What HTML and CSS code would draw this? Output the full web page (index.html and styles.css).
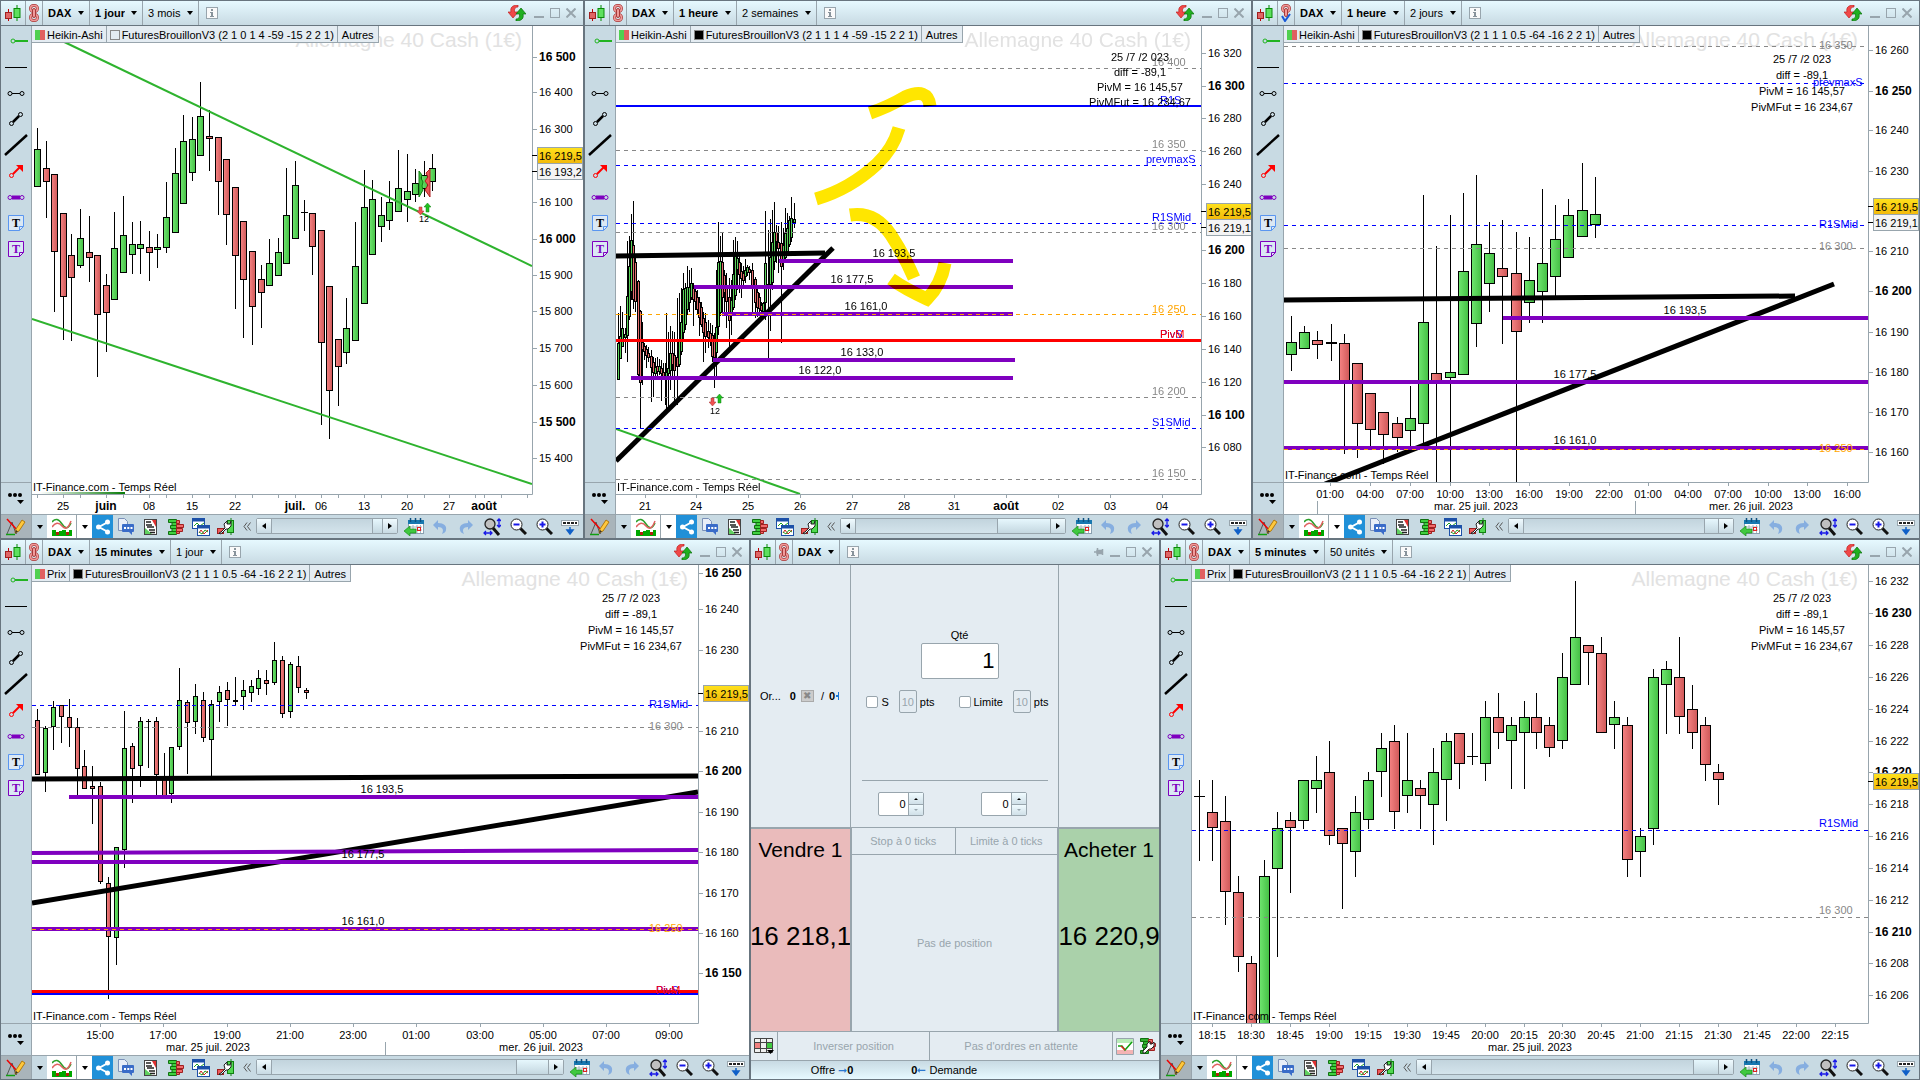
FILE: index.html
```html
<!DOCTYPE html>
<html lang="fr">
<head>
  <meta charset="UTF-8">
  <title>DAX - Allemagne 40 Cash (1€)</title>
  <link rel="stylesheet" href="styles.css">
</head>
<body>

  <!-- icons -->
  <svg class="defs" width="0" height="0" aria-hidden="true">
    <defs>
      <linearGradient id="upFill"><stop offset="0" stop-color="#6fe66f"/><stop offset="1" stop-color="#44bf44"/></linearGradient>
      <linearGradient id="downFill"><stop offset="0" stop-color="#f58383"/><stop offset="1" stop-color="#cf5858"/></linearGradient>
      <linearGradient id="goldFill" x2="0" y2="1"><stop offset="0" stop-color="#ffe21c"/><stop offset="1" stop-color="#f3b90b"/></linearGradient>
      <linearGradient id="feedFill"><stop offset="0" stop-color="#fff"/><stop offset="1" stop-color="#067a06"/></linearGradient>
    </defs>
    <symbol id="i-candles" viewBox="0 0 16 16">
      <path d="M3.5 4v12" stroke="#c00000"/><rect x="0.5" y="7.500" width="6" height="6" fill="#e06666" stroke="#a02020"/>
      <path d="M12 0v16" stroke="#008a00"/><rect x="9" y="3.500" width="6" height="9" fill="#5ee05e" stroke="#0a8a0a"/>
    </symbol>
    <symbol id="i-chain" viewBox="0 0 10 18">
      <g fill="none" stroke="#a83a3a" stroke-width="3"><rect x="1.500" y="1.500" width="7" height="6" rx="3"/><rect x="1.500" y="10.500" width="7" height="6" rx="3"/></g>
      <g fill="none" stroke="#f09a9a" stroke-width="1.600"><rect x="1.500" y="1.500" width="7" height="6" rx="3"/><rect x="1.500" y="10.500" width="7" height="6" rx="3"/></g>
      <rect x="3.500" y="4.500" width="3" height="9" rx="1.500" fill="#f09a9a" stroke="#a83a3a"/>
    </symbol>
    <symbol id="i-chain-down" viewBox="0 0 10 18">
      <rect x="1.500" y="1.500" width="7" height="6" rx="3" fill="none" stroke="#a83a3a" stroke-width="3"/>
      <rect x="1.500" y="1.500" width="7" height="6" rx="3" fill="none" stroke="#f09a9a" stroke-width="1.600"/>
      <rect x="3.500" y="4.500" width="3" height="8" rx="1.500" fill="#f09a9a" stroke="#a83a3a"/>
      <path d="M1 12l3 5 5-7" fill="none" stroke="#1858d8" stroke-width="2"/>
    </symbol>
    <symbol id="i-info" viewBox="0 0 12 12">
      <rect x="0.500" y="0.500" width="11" height="11" fill="#fafafa" stroke="#98a5ad"/>
      <path d="M5 2h2v2H5zM4 5h3v4h1v1H4V9h1V6H4z" fill="#88939b"/>
    </symbol>
    <symbol id="i-refresh" viewBox="0 0 18 16">
      <path d="M10 0C4 0 2 3 3 7H0l5 6 5-6H6.500C6 4 7 2 10 2z" fill="#f04848" stroke="#c02020" stroke-width="0.700"/>
      <path d="M8 16c6 0 8-3 7-7h3l-5-6-5 6h3.500C12 12 11 14 8 14z" fill="#20b020" stroke="#087008" stroke-width="0.700"/>
    </symbol>
    <symbol id="i-pin" viewBox="0 0 10 10"><path d="M0 5h3M3.500 1v8M3 3.500h4v3H3zM8.500 2v6" stroke="#98a5ad" stroke-width="1.500" fill="#98a5ad"/></symbol>
    <symbol id="i-min" viewBox="0 0 10 10"><path d="M0 9h10" stroke="#98a5ad" stroke-width="2"/></symbol>
    <symbol id="i-max" viewBox="0 0 10 10"><rect x="0.500" y="0.500" width="9" height="9" fill="none" stroke="#98a5ad"/></symbol>
    <symbol id="i-close" viewBox="0 0 10 10"><path d="M0.500 0.500l9 9M9.500 0.500l-9 9" stroke="#98a5ad" stroke-width="2"/></symbol>
    <symbol id="i-draw" viewBox="0 0 20 18">
      <path d="M1 16L6 4l4 12 4-10" fill="none" stroke="#555"/><path d="M1 1l11 12" stroke="#f00000" stroke-width="1.500"/>
      <path d="M0 16.500h9" stroke="#10a010" stroke-width="1.500"/>
      <path d="M9 15l1-4 6-9 3 2-6 9z" fill="#ffc83c" stroke="#b07a10"/><path d="M9 15l1-3 2 1.500z" fill="#333"/>
    </symbol>
    <symbol id="i-indic" viewBox="0 0 20 18">
      <path d="M0 4Q5-2 10 6t9-1" fill="none" stroke="#2aa02a" stroke-width="1.500"/>
      <path d="M0 9Q5 2 10 8t9-5" fill="none" stroke="#e06060" stroke-width="1.500"/>
      <path d="M0 12h4v2h3v-1h3v-1h4v2h3v-2h3v6H0z" fill="#00a800"/><path d="M4 14h3v3H4zM14 14h3v3h-3z" fill="#b02010"/>
    </symbol>
    <symbol id="i-share" viewBox="0 0 14 16">
      <path d="M12 3L3 8l9 5" fill="none" stroke="#fff" stroke-width="2"/><circle cx="11.500" cy="3" r="2.500" fill="#fff"/><circle cx="2.500" cy="8" r="2.500" fill="#fff"/><circle cx="11.500" cy="13" r="2.500" fill="#fff"/>
    </symbol>
    <symbol id="i-chat" viewBox="0 0 16 17">
      <path d="M0.500 0.500h6l3 3v9h-9z" fill="#e8eef8" stroke="#7a90b8"/><path d="M5 6h10q1 0 1 1v6q0 1-1 1h-1v3l-3-3H5q-1 0-1-1V7q0-1 1-1z" fill="#3a6cc8"/>
      <path d="M6 10h2M9.300 10h2M12.500 10h2" stroke="#fff" stroke-width="1.800"/>
    </symbol>
    <symbol id="i-list" viewBox="0 0 13 16">
      <rect x="0.500" y="0.500" width="12" height="15" fill="#fff" stroke="#444"/><path d="M8 1h4v7z" fill="#e03030"/><path d="M1 9v6h7z" fill="#60d060"/>
      <path d="M2 3h5M2 6h6M3 8h7M5 11h6M6 13.500h5" stroke="#222" stroke-width="1.500"/>
    </symbol>
    <symbol id="i-book" viewBox="0 0 16 16">
      <path d="M0.500 0.500h8v3h-8zM2.500 6.500h6v3h-6zM0.500 12.500h8v3h-8z" fill="#40d040" stroke="#107010"/>
      <path d="M4 3.500h5v3H4zM4 9.500h5v3H4z" fill="#40d040" stroke="#107010"/>
      <path d="M8.500 1.500h3v3h-3zM8.500 5.500h7v3h-7zM8.500 9.500h6v3h-6zM8.500 12.500h3v2h-3z" fill="#f06a6a" stroke="#a02020"/>
    </symbol>
    <symbol id="i-windows" viewBox="0 0 18 18">
      <rect x="0.500" y="0.500" width="12" height="10" fill="#fff" stroke="#1c50a8"/><path d="M0.500 2h12" stroke="#1c50a8" stroke-width="3"/><path d="M2 8l3-3 3 3 4-3" fill="none" stroke="#20a020"/>
      <rect x="5.500" y="7.500" width="12" height="10" fill="#fff" stroke="#1c50a8"/><path d="M5.500 9h12" stroke="#1c50a8" stroke-width="3"/><path d="M7 15l2-3 3 4 4-4" fill="none" stroke="#d02020"/><path d="M7 14l3 2 3-4 3 2" fill="none" stroke="#20a020"/>
    </symbol>
    <symbol id="i-wrench" viewBox="0 0 17 18">
      <rect x="0.500" y="10.500" width="6" height="5" fill="#f05a5a" stroke="#a02020"/><path d="M14 0v17" stroke="#108010"/><rect x="10.500" y="2.500" width="6" height="12" fill="#50d850" stroke="#108010"/>
      <path d="M4 14l4-4-1-4 3-3v3h3l1-3v5l-3 3H9l-4 4-2 1-1-1z" fill="#fff" stroke="#222"/>
    </symbol>
    <symbol id="i-chevrons" viewBox="0 0 8 9"><path d="M4 0.500L1 4.500l3 4M7.500 0.500l-3 4 3 4" fill="none" stroke="#555"/></symbol>
    <symbol id="i-calendar" viewBox="0 0 20 18">
      <rect x="4.500" y="2.500" width="15" height="13" fill="#fff" stroke="#8aa0b0"/><rect x="4" y="2" width="16" height="4" fill="#1878b0"/><path d="M6.500 0v4M11.500 0v4M16.500 0v4" stroke="#0c5080" stroke-width="1.500"/>
      <path d="M6 9h12M6 12h12M9 7v8M13 7v8M16.500 7v8" stroke="#a8b8c4"/><rect x="13.500" y="9.500" width="3" height="3" fill="none" stroke="#e02020"/>
      <path d="M0 13l6-5v3h6v4H6v3z" fill="#40c840" stroke="#189018" stroke-width="0.700"/>
    </symbol>
    <symbol id="i-undo" viewBox="0 0 14 14"><path d="M0 5l5-5v3c6 0 9 3 8 7 0 2-2 3-4 4 2-4 1-7-4-7v3z" fill="#86aee0"/></symbol>
    <symbol id="i-redo" viewBox="0 0 14 14"><path d="M14 5L9 0v3C3 3 0 6 1 10c0 2 2 3 4 4-2-4-1-7 4-7v3z" fill="#86aee0"/></symbol>
    <symbol id="i-zoomfit" viewBox="0 0 18 18">
      <path d="M10 10l6 7" stroke="#111" stroke-width="3"/><circle cx="7" cy="6" r="5" fill="#c0c0c0" stroke="#222" stroke-width="1.300"/>
      <path d="M16 1v8M14 3l2-2 2 2M14 7l2 2 2-2M1 15h8M3 13l-2 2 2 2M7 13l2 2-2 2" fill="none" stroke="#1818e8" stroke-width="1.300"/>
    </symbol>
    <symbol id="i-zoomout" viewBox="0 0 17 17"><path d="M10 10l6 6" stroke="#111" stroke-width="3"/><circle cx="6.500" cy="6.500" r="5.500" fill="#fff" stroke="#222"/><path d="M3.500 6.500h6" stroke="#1818e8" stroke-width="2"/></symbol>
    <symbol id="i-zoomin" viewBox="0 0 17 17"><path d="M10 10l6 6" stroke="#111" stroke-width="3"/><circle cx="6.500" cy="6.500" r="5.500" fill="#fff" stroke="#222"/><path d="M3.500 6.500h6M6.500 3.500v6" stroke="#1818e8" stroke-width="2"/></symbol>
    <symbol id="i-keys" viewBox="0 0 18 16"><rect x="0.500" y="1.500" width="17" height="5" fill="#fff" stroke="#98a5ad"/><path d="M2 4h14" stroke="#222" stroke-width="2" stroke-dasharray="3 1"/><path d="M9 8v6M6 11l3 4 3-4z" stroke="#1060c8" stroke-width="1.500" fill="#1060c8"/></symbol>

    <symbol id="t-ray" viewBox="0 0 24 24"><path d="M11 12h13" stroke="#22b422" stroke-width="2"/><circle cx="9" cy="12" r="2" fill="none" stroke="#22b422"/></symbol>
    <symbol id="t-hline" viewBox="0 0 24 24"><path d="M1 12.500h22" stroke="#000"/></symbol>
    <symbol id="t-segment" viewBox="0 0 24 24"><path d="M8 12.500h8" stroke="#000"/><circle cx="6" cy="12.500" r="2" fill="none" stroke="#000"/><circle cx="18" cy="12.500" r="2" fill="none" stroke="#000"/></symbol>
    <symbol id="t-diag" viewBox="0 0 24 24"><path d="M9 15l6-6" stroke="#000" stroke-width="2.500"/><circle cx="7.500" cy="16.500" r="2" fill="none" stroke="#000"/><circle cx="16.500" cy="7.500" r="2" fill="none" stroke="#000"/></symbol>
    <symbol id="t-line" viewBox="0 0 24 24"><path d="M1 22L23 2" stroke="#000" stroke-width="2.500"/></symbol>
    <symbol id="t-arrow" viewBox="0 0 24 24"><path d="M9 15l7-7" stroke="#f00" stroke-width="2"/><path d="M12 6h7v7z" fill="#f00"/><circle cx="7.500" cy="16.500" r="2" fill="none" stroke="#f00"/></symbol>
    <symbol id="t-thick" viewBox="0 0 24 24"><path d="M8 12.500h8" stroke="#7f00bf" stroke-width="4"/><circle cx="6" cy="12.500" r="2" fill="none" stroke="#7f00bf"/><circle cx="18" cy="12.500" r="2" fill="none" stroke="#7f00bf"/></symbol>
    <symbol id="t-note" viewBox="0 0 16 16"><path d="M0.500 0.500h15v11l-4 4h-11zM11.500 15.500v-4h4" fill="#dbe8f4" stroke="currentColor"/></symbol>
    <symbol id="m-pair" viewBox="0 0 14 12"><path d="M2 4h3v4h2l-3.500 4L0 8h2z" fill="#f05050" stroke="#a03030" stroke-width="0.500"/><path d="M9 9h3V4h2l-3.500-4L7 4h2z" fill="#20c020" stroke="#108010" stroke-width="0.500"/></symbol>
    <symbol id="i-table" viewBox="0 0 20 16"><path d="M0.500 0.500h18v14h-18z" fill="#f0f0f0" stroke="#444"/><rect x="1" y="5" width="6" height="5" fill="#f08080"/><rect x="13" y="5" width="5" height="5" fill="#40c840"/><path d="M0.500 4.500h18M0.500 10.500h18M6.500 0v15M12.500 0v15" stroke="#444"/><path d="M13 12h7l-3.500 4z" fill="#000"/></symbol>
    <symbol id="i-orders" viewBox="0 0 18 17"><path d="M0.500 0.500h17v16h-17z" fill="#fff" stroke="#98a5ad"/><path d="M1 3h16" stroke="#b8ecb8" stroke-width="4"/><path d="M1 14h16" stroke="#f4b4b4" stroke-width="4"/><path d="M2 8h4l3 4 7-8" fill="none" stroke="#10a010" stroke-width="1.500"/><path d="M5 8l4 4" stroke="#e02020" stroke-width="1.500"/></symbol>
    <symbol id="i-bookset" viewBox="0 0 16 16">
      <path d="M0.500 0.500h8v3h-8zM2.500 6.500h6v3h-6zM0.500 12.500h8v3h-8zM3.500 3.500h5v3h-5zM3.500 9.500h5v3h-5z" fill="#30b030" stroke="#107010"/>
      <path d="M8.500 1.500h4v3h-4zM8.500 5.500h7v3h-7zM8.500 9.500h6v3h-6z" fill="#f06a6a" stroke="#a02020"/>
      <path d="M3 13l4-4V6l3-3v3h2l2-2v4l-3 3H9l-4 4H3z" fill="#fff" stroke="#222"/>
    </symbol>
  </svg>

  <!-- shared by the chart windows -->
  <template id="sidebarTpl">
    <div class="tools">
      <button title="Demi-droite"><svg width="24" height="24"><use href="#t-ray"/></svg></button>
      <button title="Ligne horizontale"><svg width="24" height="24"><use href="#t-hline"/></svg></button>
      <button title="Segment horizontal"><svg width="24" height="24"><use href="#t-segment"/></svg></button>
      <button title="Segment"><svg width="24" height="24"><use href="#t-diag"/></svg></button>
      <button title="Droite"><svg width="24" height="24"><use href="#t-line"/></svg></button>
      <button title="Flèche"><svg width="24" height="24"><use href="#t-arrow"/></svg></button>
      <button title="Segment épais"><svg width="24" height="24"><use href="#t-thick"/></svg></button>
      <button class="note" title="Texte"><svg width="16" height="16"><use href="#t-note"/></svg><span>T</span></button>
      <button class="note violet" title="Note"><svg width="16" height="16"><use href="#t-note"/></svg><span>T</span></button>
    </div>
    <button class="more" title="Plus d'outils"><svg width="18" height="14"><circle cx="3" cy="4" r="2"/><circle cx="8" cy="4" r="2"/><circle cx="13" cy="4" r="2"/><path d="M10 9h7l-3.500 4z"/></svg></button>
  </template>

  <template id="toolbarTpl">
    <button class="tool-draw" title="Dessiner"><svg width="20" height="18"><use href="#i-draw"/></svg></button>
    <button class="drop" title="Options de dessin"></button>
    <button class="tool-indic" title="Indicateurs"><svg width="20" height="18"><use href="#i-indic"/></svg></button>
    <button class="drop white" title="Options"></button>
    <button class="tool-share" title="Partager"><svg width="14" height="16"><use href="#i-share"/></svg></button>
    <button class="tool" title="Messages"><svg width="16" height="17"><use href="#i-chat"/></svg></button>
    <button class="tool" title="Liste"><svg width="13" height="16"><use href="#i-list"/></svg></button>
    <button class="tool" title="Carnet d'ordres"><svg width="16" height="16"><use href="#i-book"/></svg></button>
    <button class="tool" title="Fenêtres"><svg width="18" height="18"><use href="#i-windows"/></svg></button>
    <button class="tool" title="Réglages"><svg width="17" height="18"><use href="#i-wrench"/></svg></button>
    <button class="tool-fold" title="Réduire"><svg width="8" height="9"><use href="#i-chevrons"/></svg></button>
    <div class="scroll">
      <button class="scroll-left" title="Reculer"></button>
      <div class="track"><div class="thumb"></div></div>
      <button class="scroll-right" title="Avancer"></button>
    </div>
    <button class="tool-nav" title="Date"><svg width="20" height="18"><use href="#i-calendar"/></svg></button>
    <button class="tool-nav" title="Annuler"><svg width="14" height="14"><use href="#i-undo"/></svg></button>
    <button class="tool-nav" title="Rétablir"><svg width="14" height="14"><use href="#i-redo"/></svg></button>
    <button class="tool-nav" title="Ajuster"><svg width="18" height="18"><use href="#i-zoomfit"/></svg></button>
    <button class="tool-nav" title="Zoom arrière"><svg width="17" height="17"><use href="#i-zoomout"/></svg></button>
    <button class="tool-nav" title="Zoom avant"><svg width="17" height="17"><use href="#i-zoomin"/></svg></button>
    <button class="tool-nav" title="Raccourcis"><svg width="18" height="16"><use href="#i-keys"/></svg></button>
  </template>

  <template id="winTpl">
    <button class="refresh" title="Actualiser"><svg width="18" height="16"><use href="#i-refresh"/></svg></button>
    <button class="pin" title="Épingler"><svg width="10" height="10"><use href="#i-pin"/></svg></button>
    <button title="Réduire"><svg width="10" height="10"><use href="#i-min"/></svg></button>
    <button title="Agrandir"><svg width="10" height="10"><use href="#i-max"/></svg></button>
    <button title="Fermer"><svg width="10" height="10"><use href="#i-close"/></svg></button>
  </template>

  <div class="desk">
    <div class="row row-top">

      <section class="window" data-chart="daily" data-thumb="10">
        <header class="titlebar">
          <button class="cell" title="Type"><svg width="16" height="16"><use href="#i-candles"/></svg></button>
          <button class="cell link" title="Lier"><svg width="10" height="18"><use href="#i-chain"/></svg></button>
          <select class="cell bold" aria-label="Valeur"><option>DAX</option></select>
          <select class="cell bold" aria-label="Unité de temps"><option>1 jour</option></select>
          <select class="cell" aria-label="Période"><option>3 mois</option></select>
          <button class="info" title="Informations"><svg width="12" height="12"><use href="#i-info"/></svg></button>
          <div class="win-buttons"></div>
        </header>
        <aside class="sidebar"></aside>
        <div class="chart">
          <div class="tabs">
            <button><i class="duo"></i>Heikin-Ashi</button>
            <button><i class="box"></i>FuturesBrouillonV3 (2 1 0 1 4 -59 -15 2 2 1)</button>
            <button>Autres</button>
          </div>
        </div>
        <footer class="toolbar"></footer>
      </section>

      <section class="window" data-chart="hourly" data-thumb="53">
        <header class="titlebar">
          <button class="cell" title="Type"><svg width="16" height="16"><use href="#i-candles"/></svg></button>
          <button class="cell link" title="Lier"><svg width="10" height="18"><use href="#i-chain"/></svg></button>
          <select class="cell bold" aria-label="Valeur"><option>DAX</option></select>
          <select class="cell bold" aria-label="Unité de temps"><option>1 heure</option></select>
          <select class="cell" aria-label="Période"><option>2 semaines</option></select>
          <button class="info" title="Informations"><svg width="12" height="12"><use href="#i-info"/></svg></button>
          <div class="win-buttons"></div>
        </header>
        <aside class="sidebar"></aside>
        <div class="chart">
          <div class="tabs">
            <button><i class="duo"></i>Heikin-Ashi</button>
            <button><i class="box full"></i>FuturesBrouillonV3 (2 1 1 1 4 -59 -15 2 2 1)</button>
            <button>Autres</button>
          </div>
        </div>
        <footer class="toolbar"></footer>
      </section>

      <section class="window" data-chart="hourlyZoom" data-thumb="14">
        <header class="titlebar">
          <button class="cell" title="Type"><svg width="16" height="16"><use href="#i-candles"/></svg></button>
          <button class="cell link" title="Lier"><svg width="10" height="18"><use href="#i-chain-down"/></svg></button>
          <select class="cell bold" aria-label="Valeur"><option>DAX</option></select>
          <select class="cell bold" aria-label="Unité de temps"><option>1 heure</option></select>
          <select class="cell" aria-label="Période"><option>2 jours</option></select>
          <button class="info" title="Informations"><svg width="12" height="12"><use href="#i-info"/></svg></button>
          <div class="win-buttons"></div>
        </header>
        <aside class="sidebar"></aside>
        <div class="chart">
          <div class="tabs">
            <button><i class="duo"></i>Heikin-Ashi</button>
            <button><i class="box full"></i>FuturesBrouillonV3 (2 1 1 1 0.5 -64 -16 2 2 1)</button>
            <button>Autres</button>
          </div>
        </div>
        <footer class="toolbar"></footer>
      </section>
    </div>

    <div class="row row-bottom">

      <section class="window" data-chart="quarter" data-thumb="32">
        <header class="titlebar">
          <button class="cell" title="Type"><svg width="16" height="16"><use href="#i-candles"/></svg></button>
          <button class="cell link" title="Lier"><svg width="10" height="18"><use href="#i-chain"/></svg></button>
          <select class="cell bold" aria-label="Valeur"><option>DAX</option></select>
          <select class="cell bold" aria-label="Unité de temps"><option>15 minutes</option></select>
          <select class="cell" aria-label="Période"><option>1 jour</option></select>
          <button class="info" title="Informations"><svg width="12" height="12"><use href="#i-info"/></svg></button>
          <div class="win-buttons"></div>
        </header>
        <aside class="sidebar"></aside>
        <div class="chart">
          <div class="tabs">
            <button><i class="duo"></i>Prix</button>
            <button><i class="box full"></i>FuturesBrouillonV3 (2 1 1 1 0.5 -64 -16 2 2 1)</button>
            <button>Autres</button>
          </div>
        </div>
        <footer class="toolbar"></footer>
      </section>

      <section class="window order">
        <header class="titlebar">
          <button class="cell" title="Type"><svg width="16" height="16"><use href="#i-candles"/></svg></button>
          <button class="cell link" title="Lier"><svg width="10" height="18"><use href="#i-chain"/></svg></button>
          <select class="cell bold" aria-label="Valeur"><option>DAX</option></select>
          <button class="info" title="Informations"><svg width="12" height="12"><use href="#i-info"/></svg></button>
          <div class="win-buttons"></div>
        </header>
        <div class="ticket">
          <div class="pending">
            <span>Or...</span><b>0</b><button class="cancel" title="Annuler les ordres">✖</button><span>/</span><b>0</b><i class="half"></i>
          </div>
          <div class="form">
            <div class="qty">
              <label for="qty">Qté</label>
              <input id="qty" type="text" value="1">
            </div>
            <div class="limits">
              <label><input type="checkbox">S</label>
              <label><input class="pts" type="text" value="10" disabled>pts</label>
              <label class="second"><input type="checkbox">Limite</label>
              <label><input class="pts" type="text" value="10" disabled>pts</label>
            </div>
            <div class="ticks">
              <div class="spin"><input type="text" value="0" aria-label="Stop"><button class="up" title="Plus"></button><button class="down" title="Moins"></button></div>
              <div class="spin"><input type="text" value="0" aria-label="Limite"><button class="up" title="Plus"></button><button class="down" title="Moins"></button></div>
            </div>
          </div>
          <div class="empty"></div>
          <button class="sell"><span>Vendre 1</span><strong>16 218,1</strong></button>
          <div class="position">
            <button disabled>Stop à 0 ticks</button>
            <button disabled>Limite à 0 ticks</button>
            <p>Pas de position</p>
          </div>
          <button class="buy"><span>Acheter 1</span><strong>16 220,9</strong></button>
        </div>
        <div class="actions">
          <button title="Affichage"><svg width="20" height="16"><use href="#i-table"/></svg></button>
          <button class="wide" disabled>Inverser position</button>
          <button class="wide last" disabled>Pas d'ordres en attente</button>
          <button title="Ordres"><svg width="18" height="17"><use href="#i-orders"/></svg></button>
          <button title="Réglages"><svg width="16" height="16"><use href="#i-bookset"/></svg></button>
        </div>
        <div class="quotes">
          <span>Offre <em class="to">➞</em><b>0</b></span>
          <span><b>0</b><em class="from">➞</em> Demande</span>
        </div>
      </section>

      <section class="window" data-chart="five" data-thumb="25">
        <header class="titlebar">
          <button class="cell" title="Type"><svg width="16" height="16"><use href="#i-candles"/></svg></button>
          <button class="cell link" title="Lier"><svg width="10" height="18"><use href="#i-chain"/></svg></button>
          <select class="cell bold" aria-label="Valeur"><option>DAX</option></select>
          <select class="cell bold" aria-label="Unité de temps"><option>5 minutes</option></select>
          <select class="cell" aria-label="Période"><option>50 unités</option></select>
          <button class="info" title="Informations"><svg width="12" height="12"><use href="#i-info"/></svg></button>
          <div class="win-buttons"></div>
        </header>
        <aside class="sidebar"></aside>
        <div class="chart">
          <div class="tabs">
            <button><i class="duo"></i>Prix</button>
            <button><i class="box full"></i>FuturesBrouillonV3 (2 1 1 1 0.5 -64 -16 2 2 1)</button>
            <button>Autres</button>
          </div>
        </div>
        <footer class="toolbar"></footer>
      </section>
    </div>
  </div>

  <script src="charts.js"></script>
</body>
</html>
```
FILE: styles.css
```css
* {
  box-sizing: border-box;
}

body {
  margin: 0;
  font-family: "Liberation Sans", Arial, sans-serif;
  font-size: 11px;
  color: #000;
  background-color: #68757f;
}

button, select, input {
  font: inherit;
  color: inherit;
  margin: 0;
  padding: 0;
  border: none;
  border-radius: 0;
  background: none;
}

.defs {
  position: absolute;
}

.desk {
  display: grid;
  grid-template-rows: minmax(0, 537fr) minmax(0, 539fr);
  gap: 2px;
  height: 100vh;
  padding: 1px;
}

.row {
  display: grid;
  gap: 2px;
  min-height: 0;
}

.row-top {
  grid-template-columns: minmax(0, 582fr) minmax(0, 666fr) minmax(0, 666fr);
}

.row-bottom {
  grid-template-columns: minmax(0, 748fr) minmax(0, 408fr) minmax(0, 758fr);
}

.window {
  display: grid;
  grid-template-columns: 31px minmax(0, 1fr);
  grid-template-rows: 25px minmax(0, 1fr) 24px;
  background-color: #c8dae3;
}

/* title bar */
.titlebar {
  grid-column: 1 / -1;
  display: flex;
  align-items: stretch;
  background: linear-gradient(#e6f9ff, #c8dae3);
  border-bottom: 1px solid #68757f;
}

.titlebar svg, .toolbar svg, .actions svg {
  display: block;
}

.cell {
  padding: 0 4px;
  border-right: 1px solid #98a5ad;
}

.cell.link {
  padding: 0 3px;
}

select.cell {
  appearance: none;
  padding: 0 17px 0 5px;
  background: url("data:image/svg+xml,%3Csvg xmlns='http://www.w3.org/2000/svg' width='6' height='4'%3E%3Cpath d='M0 0h6L3 4z'/%3E%3C/svg%3E") no-repeat right 5px center;
}

.bold {
  font-weight: bold;
}

.info {
  padding: 0 7px;
}

.win-buttons {
  display: flex;
  align-items: center;
  gap: 6px;
  margin-left: auto;
  padding-right: 7px;
}

.refresh {
  margin-right: 2px;
}

.pin, .order .refresh {
  display: none;
}

.order .pin {
  display: block;
}

/* drawing tools */
.sidebar {
  display: flex;
  flex-direction: column;
  justify-content: space-between;
  border-right: 1px solid #98a5ad;
}

.tools {
  display: flex;
  flex-direction: column;
  padding-top: 2px;
}

.tools button {
  display: flex;
  align-items: center;
  justify-content: center;
  height: 26px;
}

.tools .note {
  display: grid;
  place-items: center;
  color: #5a96f0;
}

.note svg, .note span {
  grid-area: 1 / 1;
}

.note span {
  font-family: "Liberation Serif", serif;
  font-size: 12px;
  font-weight: bold;
  color: #000;
}

.tools .violet, .violet span {
  color: #7f00bf;
}

.more {
  height: 32px;
  border-top: 1px solid #98a5ad;
}

/* chart */
.chart {
  position: relative;
  min-height: 0;
  background-color: #fff;
}

.chart > svg {
  display: block;
  width: 100%;
  height: 100%;
}

.tabs {
  position: absolute;
  top: 0;
  left: 0;
  display: flex;
  height: 17px;
  background-color: #e4ecf2;
  border-bottom: 1px solid #98a5ad;
}

.tabs button {
  display: flex;
  align-items: center;
  gap: 2px;
  padding: 1px 3px 0;
  border-right: 1px solid #98a5ad;
  white-space: nowrap;
}

.tabs button:last-child {
  padding: 1px 4px 0;
}

.tabs i {
  width: 10px;
  height: 10px;
}

.duo {
  background: linear-gradient(90deg, #50d050 50%, #e06060 50%);
}

.box {
  border: 1px solid #888;
}

.box.full {
  background-color: #000;
}

.chart text {
  font-size: 11px;
}

.chart .strong {
  font-size: 12px;
  font-weight: bold;
}

.chart .watermark {
  font-size: 21px;
  fill: #e2e2e2;
}

.chart .small {
  font-size: 9px;
}

.marker {
  fill: none;
  stroke: #ffe600;
  stroke-width: 13;
  mix-blend-mode: multiply;
}

/* bottom toolbar */
.toolbar {
  grid-column: 1 / -1;
  display: flex;
  align-items: stretch;
  border-top: 1px solid #98a5ad;
}

.toolbar button {
  display: flex;
  align-items: center;
  justify-content: center;
  flex: none;
}

.toolbar .tool-draw {
  width: 31px;
  background-color: #a9b4ba;
  border-right: 1px solid #98a5ad;
}

.drop {
  width: 15px;
}

.drop::before {
  content: "";
  border: 3px solid transparent;
  border-top: 4px solid #000;
  border-bottom: none;
}

.tool-indic {
  width: 30px;
  background-color: #fff;
  border-right: 1px solid #98a5ad;
}

.drop.white {
  background-color: #fff;
}

.tool-share {
  width: 21px;
  background-color: #2090d8;
}

.tool {
  width: 25px;
}

.tool-fold {
  width: 18px;
}

.scroll {
  flex: 1;
  display: flex;
  height: 16px;
  margin: 3px 3px 0 0;
  border: 1px solid #98a5ad;
  border-radius: 2px;
  background-color: #d2e1e9;
}

.scroll button {
  width: 14px;
  background: linear-gradient(#f0fbff, #c8dae3);
}

.scroll-left::before, .scroll-right::before {
  content: "";
  border: 3px solid transparent;
}

.scroll-left::before {
  border-right: 4px solid #000;
  border-left: none;
}

.scroll-right::before {
  border-left: 4px solid #000;
  border-right: none;
}

.track {
  flex: 1;
  display: flex;
  justify-content: flex-end;
  border-left: 1px solid #98a5ad;
  border-right: 1px solid #98a5ad;
  background: linear-gradient(#c2d4dd, #d4e4ec);
}

.thumb {
  border-left: 1px solid #98a5ad;
  background: linear-gradient(#e6f7fd, #c4d7e0);
}

.tool-nav {
  width: 26px;
}

/* order ticket */
.order {
  grid-template-columns: minmax(0, 1fr);
  grid-template-rows: 25px minmax(0, 1fr) 29px 18px;
  background-color: #e4ecf2;
}

.ticket {
  display: grid;
  grid-template-columns: minmax(0, 99fr) minmax(0, 209fr) minmax(0, 100fr);
  grid-template-rows: minmax(0, 263fr) minmax(0, 204fr);
  min-height: 0;
  border-bottom: 1px solid #98a5ad;
}

.pending {
  display: flex;
  align-items: center;
  gap: 5px;
  padding-left: 9px;
}

.pending b {
  margin-left: 4px;
}

.pending b + button {
  margin-right: 2px;
}

.pending b:last-of-type {
  margin-left: 0;
}

.cancel {
  width: 13px;
  height: 12px;
  font-size: 10px;
  line-height: 10px;
  color: #888;
  background-color: #ccc;
  border: 1px solid #aaa;
}

.half {
  width: 3px;
  height: 8px;
  margin-left: -4px;
  border-right: 1px solid #1878d8;
  background: linear-gradient(transparent 3px, #1878d8 3px, #1878d8 5px, transparent 5px);
}

.form {
  display: flex;
  flex-direction: column;
  align-items: center;
  padding-top: 64px;
  border: 1px solid #98a5ad;
  border-width: 0 1px;
}

.qty {
  display: flex;
  flex-direction: column;
  align-items: center;
  gap: 2px;
  padding-left: 10px;
}

.qty input {
  width: 78px;
  height: 36px;
  padding-right: 3px;
  text-align: right;
  font-size: 22px;
  background-color: #fff;
  border: 1px solid #98a5ad;
  border-radius: 2px;
}

.limits {
  display: flex;
  align-items: center;
  gap: 10px;
  margin-top: 11px;
  padding-left: 6px;
}

.limits label {
  display: flex;
  align-items: center;
  gap: 3px;
}

.limits .second {
  margin-left: 14px;
}

.limits input[type="checkbox"] {
  appearance: none;
  width: 12px;
  height: 12px;
  background-color: #fff;
  border: 1px solid #98a5ad;
  border-radius: 2px;
}

.pts {
  width: 18px;
  height: 23px;
  text-align: center;
  color: #98a5ad;
  border: 1px solid #98a5ad;
  border-radius: 2px;
}

.ticks {
  display: flex;
  justify-content: space-between;
  width: 186px;
  margin-top: auto;
  padding: 11px 21px 11px 16px;
  border-top: 1px solid #98a5ad;
}

.spin {
  display: grid;
  grid-template: 11px 11px / 29px 15px;
  border: 1px solid #98a5ad;
  border-radius: 2px;
  background-color: #fff;
}

.spin input {
  grid-row: span 2;
  width: 100%;
  padding-right: 2px;
  text-align: right;
}

.spin button {
  display: flex;
  align-items: center;
  justify-content: center;
  border-left: 1px solid #98a5ad;
  background: linear-gradient(#f0fbff, #d0e0e8);
}

.spin .down {
  border-top: 1px solid #98a5ad;
}

.up::before, .down::before {
  content: "";
  border: 2px solid transparent;
}

.up::before {
  border-bottom: 2px solid #000;
  border-top: none;
}

.down::before {
  border-top: 2px solid #98a5ad;
  border-bottom: none;
}

.sell, .buy {
  display: flex;
  flex-direction: column;
  align-items: center;
  gap: 58px;
  padding-top: 9px;
  overflow: hidden;
  font-size: 21px;
  line-height: 24px;
  white-space: nowrap;
  border-top: 2px solid #98a5ad;
}

.sell {
  background-color: #eabbbb;
}

.buy {
  background-color: #aad1aa;
}

.sell strong, .buy strong {
  font-size: 26px;
  line-height: 32px;
  font-weight: normal;
}

.position {
  display: grid;
  grid-template: 27px minmax(0, 1fr) / 1fr 1fr;
  color: #98a5ad;
  border: 1px solid #98a5ad;
  border-width: 1px 2px 0;
}

.position button {
  border-bottom: 1px solid #98a5ad;
}

.position button + button {
  border-left: 1px solid #98a5ad;
}

.position p {
  grid-column: 1 / -1;
  align-self: center;
  margin: 0;
  text-align: center;
}

.actions {
  display: flex;
  border-bottom: 1px solid #98a5ad;
}

.actions button {
  padding: 0 3px;
}

.actions .wide {
  flex: 151 1 0;
  color: #98a5ad;
  border-left: 1px solid #98a5ad;
}

.actions .last {
  flex: 183 1 0;
  border-right: 1px solid #98a5ad;
}

.quotes {
  display: flex;
  align-items: center;
  justify-content: center;
  gap: 58px;
  padding-right: 122px;
  background: linear-gradient(#c8dae3, #e6f9ff);
}

.quotes em {
  display: inline-block;
  font-style: normal;
  color: #2a78d0;
}

.quotes .from {
  rotate: 180deg;
}
```
FILE: charts.js
```js
const NS = 'http://www.w3.org/2000/svg';
const INFO = ['25 /7 /2 023', 'diff = -89,1', 'PivM = 16 145,57', 'PivMFut = 16 234,67'];

// view: x, y, width, height of the drawing; plot: right and bottom edge of the price area
// candles: high, body top, body bottom, low, up/down
const charts = {
  daily: {
    view: [32, 26, 551, 488], plot: [532, 494],
    start: 37, step: 8.597, width: 6,
    candles: `128 149 187 187 u,141 168 182 218 d,174 174 252 312 d,213 213 297 340 d,234 255 278 341 d,
      209 238 266 268 u,216 252 258 282 d,255 255 315 377 d,274 285 313 352 d,212 248 300 300 u,196 235 273 273 u,
      222 244 255 274 u,221 244 249 274 u,231 247 253 281 d,234 247 250 268 u,182 217 248 253 u,148 173 233 233 u,
      115 141 204 204 u,117 139 173 181 u,82 116 156 156 u,110 136 139 171 d,137 137 182 215 d,159 159 215 245 d,
      187 187 256 309 d,221 221 280 338 d,251 251 307 345 d,265 279 293 328 d,239 263 286 286 u,238 252 276 276 u,
      168 215 264 264 u,161 185 239 239 u,200 212 213 231 d,213 213 247 275 d,230 230 343 425 d,286 286 391 439 d,
      339 339 367 406 d,298 328 353 364 u,222 266 341 341 u,170 207 304 304 u,180 199 255 255 u,197 215 227 242 u,
      181 202 221 230 u,150 188 212 212 u,154 191 200 222 u,169 183 195 202 u,161 175 189 197 u,154 168 182 191 u`,
    lines: [
      [58, 39, 532, 266, '#2eb32e', 2], [32, 319, 532, 484, '#2eb32e', 2]
    ],
    signals: [[417, 203]],
    texts: [[424, 222, '12', '#000', 'middle', 'small']],
    watermark: [522, 47],
    yAxis: [['*16 500', 57], ['16 400', 92], ['16 300', 129], ['16 100', 202], ['*16 000', 239], ['15 900', 275],
      ['15 800', 311], ['15 700', 348], ['15 600', 385], ['*15 500', 422], ['15 400', 458]],
    tags: [[147, '16 219,5', true], [163, '16 193,2']],
    xAxis: [[63, '25'], [106, '*juin'], [149, '08'], [192, '15'], [235, '22'], [295, '*juil.'], [321, '06'],
      [364, '13'], [407, '20'], [449, '27'], [484, '*août']],
    ticks: [37, 80, 123, 166, 209, 252, 278, 338, 381, 424, 475, 501, 527]
  },

  hourly: {
    view: [616, 26, 635, 488], plot: [1201, 494],
    width: 2,
    candles: `618 313 343 380 380 u,620 306 336 359 359 u,622 312 328 347 347 u,625 328 334 338 353 u,627 241 296 336 362 u,
      629 236 266 317 320 u,631 214 240 292 300 u,633 201 245 300 309 d,635 255 262 302 312 d,638 280 281 375 377 d,
      640 310 311 383 428 d,642 322 342 350 385 d,644 343 346 352 360 d,646 345 349 356 368 d,648 347 353 358 362 d,
      651 350 356 368 402 d,653 357 362 373 397 d,655 358 367 374 378 u,657 357 366 372 380 d,659 359 366 372 375 u,
      661 360 368 374 401 d,663 363 372 377 378 d,665 363 372 378 405 d,666 313 372 378 410 u,668 332 368 374 408 u,
      670 326 353 371 390 u,672 331 353 365 378 d,674 332 355 371 402 d,677 298 357 367 405 d,679 293 340 365 367 u,
      681 288 322 352 355 u,683 273 289 333 340 u,685 283 288 325 330 u,687 266 287 310 315 u,689 270 287 303 312 u,
      691 268 283 298 300 u,693 283 288 300 326 d,695 288 291 302 310 d,697 290 297 310 315 d,699 297 302 318 336 d,
      701 302 307 325 327 d,703 312 318 333 362 d,705 313 322 337 353 d,708 320 331 338 348 d,710 323 333 340 346 d,
      712 325 335 357 362 d,714 333 338 358 388 d,716 270 327 353 380 u,718 222 262 327 335 u,720 236 261 313 316 u,
      722 233 262 298 313 d,724 270 275 293 312 d,726 273 288 302 328 d,729 278 297 321 347 d,731 280 300 315 335 u,
      733 240 274 308 310 u,735 237 256 296 300 u,737 241 258 270 290 u,739 255 262 275 293 d,741 263 271 279 298 d,
      743 266 273 281 285 d,745 259 270 277 283 u,747 265 267 273 276 u,749 266 269 273 280 d,752 263 270 288 316 d,
      755 277 279 303 318 d,757 287 292 308 317 d,759 293 297 309 313 d,761 302 305 311 315 d,763 302 303 312 317 u,
      765 211 263 303 320 u,768 230 284 286 358 d,770 219 257 285 331 u,772 210 242 283 290 u,774 202 232 262 270 u,
      776 225 232 242 263 d,778 226 242 249 273 d,781 222 243 267 343 d,783 228 245 263 270 u,785 208 233 258 262 u,
      787 213 228 252 255 u,789 216 220 245 247 u,791 197 218 238 242 u,794 203 219 223 228 u`,
    lines: [
      [616, 256, 825, 253, '#000', 5], [616, 461, 833, 248, '#000', 5],
      [616, 429, 800, 494, '#2eb32e', 2],
      [616, 106, 1201, 106, '#00f', 2],
      [779, 261, 1013, 261, '#7f00bf', 4], [694, 287, 1013, 287, '#7f00bf', 4], [722, 314, 1013, 314, '#7f00bf', 4],
      [713, 360, 1015, 360, '#7f00bf', 4], [631, 378, 1013, 378, '#7f00bf', 4],
      [616, 340.5, 1201, 340.5, '#f00', 3]
    ],
    dashes: [[68, '#888'], [150, '#888'], [232, '#888'], [397, '#888'], [479, '#888'],
      [165, '#00f'], [223, '#00f'], [428, '#00f'], [314, '#ffa500']],
    markers: [
      'M816 199Q850 189 877 164Q893 149 899 128', 'M870 113Q888 107 905 97Q928 87 930 106',
      'M850 215Q875 211 891 235Q904 255 914 278', 'M891 279Q905 289 927 299Q941 285 945 263'
    ],
    signals: [[709, 394]],
    texts: [
      [715, 414, '12', '#000', 'middle', 'small'],
      [1152, 66, '16 400', '#888'], [1152, 148, '16 350', '#888'], [1152, 230, '16 300', '#888'],
      [1152, 395, '16 200', '#888'], [1152, 477, '16 150', '#888'], [1152, 313, '16 250', '#ffa500'],
      [1146, 163, 'prevmaxS', '#00f'], [1152, 221, 'R1SMid', '#00f'], [1152, 426, 'S1SMid', '#00f'],
      [1160, 104, 'R1S', '#00f'], [1160, 338, 'PivS', '#00f'], [1160, 338, 'PivM', '#f00'],
      [894, 257, '16 193,5', '#000', 'middle'], [852, 283, '16 177,5', '#000', 'middle'],
      [866, 310, '16 161,0', '#000', 'middle'], [862, 356, '16 133,0', '#000', 'middle'],
      [820, 374, '16 122,0', '#000', 'middle']
    ],
    info: [1140, 61, 15],
    watermark: [1191, 47],
    yAxis: [['16 320', 53], ['*16 300', 86], ['16 280', 118], ['16 260', 151], ['16 240', 184], ['*16 200', 250],
      ['16 180', 283], ['16 160', 316], ['16 140', 349], ['16 120', 382], ['*16 100', 415], ['16 080', 447]],
    tags: [[203, '16 219,5', true], [219, '16 219,1']],
    xAxis: [[645, '21'], [696, '24'], [748, '25'], [800, '26'], [852, '27'], [904, '28'], [954, '31'],
      [1006, '*août'], [1058, '02'], [1110, '03'], [1162, '04']]
  },

  hourlyZoom: {
    view: [1284, 26, 635, 488], plot: [1868, 482],
    start: 1291, step: 13.21, width: 10,
    candles: `316 342 355 371 u,326 332 349 349 u,331 340 345 359 d,324 342 344 361 d,334 343 381 454 d,363 363 424 458 d,
      393 393 430 448 d,412 412 435 464 d,417 423 438 452 d,386 418 431 448 u,195 322 424 444 u,246 373 381 482 d,
      215 372 378 482 u,193 271 375 375 u,175 244 324 347 u,222 253 284 312 u,220 268 277 344 d,232 273 332 482 d,
      237 280 303 323 u,189 263 292 323 u,205 239 277 296 u,199 215 258 258 u,163 210 237 237 u,177 214 225 238 u`,
    lines: [
      [1284, 300, 1795, 296, '#000', 5], [1325, 484, 1834, 284, '#000', 5],
      [1503, 318, 1868, 318, '#7f00bf', 4], [1284, 382, 1868, 382, '#7f00bf', 4], [1284, 448, 1868, 448, '#7f00bf', 4]
    ],
    dashes: [[46, '#888'], [83, '#00f'], [225, '#00f'], [248, '#888'], [449, '#ffa500']],
    texts: [
      [1819, 49, '16 350', '#888'], [1813, 86, 'prevmaxS', '#00f'], [1819, 228, 'R1SMid', '#00f'],
      [1819, 250, '16 300', '#888'], [1819, 452, '16 250', '#ffa500'],
      [1685, 314, '16 193,5', '#000', 'middle'], [1575, 378, '16 177,5', '#000', 'middle'], [1575, 444, '16 161,0', '#000', 'middle']
    ],
    info: [1802, 63, 16],
    watermark: [1858, 47],
    yAxis: [['16 260', 50], ['*16 250', 91], ['16 240', 130], ['16 230', 171], ['16 210', 251], ['*16 200', 291],
      ['16 190', 332], ['16 180', 372], ['16 170', 412], ['16 160', 452]],
    tags: [[198, '16 219,5', true], [214, '16 219,1']],
    xAxis: [[1330, '01:00'], [1370, '04:00'], [1410, '07:00'], [1450, '10:00'], [1489, '13:00'], [1529, '16:00'],
      [1569, '19:00'], [1609, '22:00'], [1648, '01:00'], [1688, '04:00'], [1728, '07:00'], [1768, '10:00'],
      [1807, '13:00'], [1847, '16:00']],
    days: [[1476, 'mar. 25 juil. 2023'], [1751, 'mer. 26 juil. 2023']],
    splits: [1317, 1635]
  },

  quarter: {
    view: [32, 565, 717, 490], plot: [698, 1023],
    start: 37, step: 7.91, width: 4,
    candles: `709 720 775 775 d,726 728 773 792 u,701 707 727 750 u,705 705 717 743 d,699 717 728 747 d,718 727 769 796 d,
      750 766 789 789 d,766 786 789 824 d,782 786 882 884 d,877 883 937 999 d,847 847 938 965 u,711 748 850 868 u,
      743 746 769 803 d,717 721 766 787 u,719 721 722 768 d,717 721 775 796 d,753 776 796 796 d,747 747 794 803 u,
      668 700 747 750 u,700 702 723 774 d,684 696 722 734 u,692 700 738 742 d,700 704 740 778 u,686 692 702 722 u,
      682 690 700 726 d,677 700 702 705 u,680 690 697 710 u,680 686 693 702 u,670 678 689 695 u,670 680 684 695 d,
      642 660 683 685 u,656 660 714 718 d,662 664 712 718 u,656 666 688 693 d,688 690 693 699 d`,
    lines: [
      [32, 779, 698, 776, '#000', 5], [32, 903, 698, 792, '#000', 5],
      [69, 797, 698, 797, '#7f00bf', 4], [32, 853, 698, 850, '#7f00bf', 4],
      [32, 862, 698, 862, '#7f00bf', 4], [32, 929, 698, 929, '#7f00bf', 4],
      [32, 994, 698, 994, '#00f', 2], [32, 991.5, 698, 991.5, '#f00', 3]
    ],
    dashes: [[705, '#00f'], [727, '#888'], [929, '#ffa500']],
    texts: [
      [649, 708, 'R1SMid', '#00f'], [649, 730, '16 300', '#888'], [649, 932, '16 250', '#ffa500'],
      [656, 994, 'PivS', '#00f'], [656, 994, 'PivM', '#f00'],
      [382, 793, '16 193,5', '#000', 'middle'], [363, 858, '16 177,5', '#000', 'middle'], [363, 925, '16 161,0', '#000', 'middle']
    ],
    info: [631, 602, 16],
    watermark: [688, 586],
    yAxis: [['*16 250', 573], ['16 240', 609], ['16 230', 650], ['16 210', 731], ['*16 200', 771], ['16 190', 812],
      ['16 180', 852], ['16 170', 893], ['16 160', 933], ['*16 150', 973]],
    tags: [[685, '16 219,5', true]],
    xAxis: [[100, '15:00'], [163, '17:00'], [227, '19:00'], [290, '21:00'], [353, '23:00'], [416, '01:00'],
      [480, '03:00'], [543, '05:00'], [606, '07:00'], [669, '09:00']],
    days: [[208, 'mar. 25 juil. 2023'], [541, 'mer. 26 juil. 2023']],
    splits: [385]
  },

  five: {
    view: [1192, 565, 727, 490], plot: [1868, 1023],
    start: 1199, step: 12.98, width: 10,
    candles: `780 796 797 861 d,780 812 828 861 d,796 821 892 925 d,876 892 957 972 d,956 963 1025 1025 d,860 876 1025 1025 u,
      812 828 869 957 u,812 820 828 893 d,780 780 821 829 u,756 780 789 813 u,741 772 836 845 d,828 828 844 909 d,
      796 812 852 877 u,772 780 820 829 u,733 748 772 797 u,725 741 812 829 d,733 780 796 813 u,780 788 796 829 d,
      748 772 805 845 u,733 741 780 821 u,733 733 764 789 d,733 756 757 765 d,701 717 764 781 u,693 717 733 749 d,
      717 725 741 789 u,701 717 733 789 u,693 717 733 749 d,717 725 748 757 d,653 677 741 749 u,581 637 685 685 u,
      645 645 653 685 d,637 653 733 733 d,701 717 725 749 u,717 725 860 877 d,828 836 852 877 u,669 677 829 845 u,
      661 669 685 734 u,637 677 717 734 d,685 709 733 749 d,717 725 765 781 d,764 772 780 805 d`,
    lines: [],
    dashes: [[830, '#00f'], [917, '#888']],
    texts: [[1819, 827, 'R1SMid', '#00f'], [1819, 914, '16 300', '#888']],
    info: [1802, 602, 16],
    watermark: [1858, 586],
    yAxis: [['16 232', 581], ['*16 230', 613], ['16 228', 645], ['16 226', 677], ['16 224', 709], ['16 222', 741],
      ['*16 220', 772], ['16 218', 804], ['16 216', 836], ['16 214', 868], ['16 212', 900], ['*16 210', 932],
      ['16 208', 963], ['16 206', 995]],
    tags: [[773, '16 219,5', true]],
    xAxis: [[1212, '18:15'], [1251, '18:30'], [1290, '18:45'], [1329, '19:00'], [1368, '19:15'], [1407, '19:30'],
      [1446, '19:45'], [1485, '20:00'], [1524, '20:15'], [1562, '20:30'], [1601, '20:45'], [1640, '21:00'],
      [1679, '21:15'], [1718, '21:30'], [1757, '21:45'], [1796, '22:00'], [1835, '22:15']],
    days: [[1530, 'mar. 25 juil. 2023']],
    splits: []
  }
};

function add(parent, name, attrs, text) {
  const node = document.createElementNS(NS, name);
  for (const key in attrs) node.setAttribute(key, attrs[key]);
  if (text) node.textContent = text;
  parent.appendChild(node);
  return node;
}

function label(parent, x, y, text, anchor) {
  const strong = text[0] === '*';
  add(parent, 'text', { x, y, 'text-anchor': anchor, class: strong ? 'strong' : '' }, strong ? text.slice(1) : text);
}

function drawCandles(parent, chart) {
  const half = chart.width / 2;
  chart.candles.split(',').forEach((row, i) => {
    const parts = row.trim().split(/\s+/);
    const dir = parts.pop();
    const nums = parts.map(Number);
    const x = (nums.length === 5 ? nums.shift() : Math.round(chart.start + i * chart.step)) + 0.5;
    const [high, top, bottom, low] = nums;
    add(parent, 'path', { d: `M${x} ${high}V${low}`, stroke: '#000' });
    if (bottom - top < 2) {
      add(parent, 'path', { d: `M${x - half - 0.5} ${top + 0.5}h${chart.width + 1}`, stroke: '#000' });
    } else {
      add(parent, 'rect', {
        x: x - half, y: top + 0.5, width: chart.width, height: bottom - top - 1,
        fill: dir === 'u' ? 'url(#upFill)' : 'url(#downFill)', stroke: '#000'
      });
    }
  });
}

function drawChart(box, name) {
  const c = charts[name];
  const [vx, vy, vw, vh] = c.view;
  const [right, bottom] = c.plot;
  const svg = add(box, 'svg', { viewBox: c.view.join(' '), preserveAspectRatio: 'none' });
  box.prepend(svg);

  const clip = add(svg, 'clipPath', { id: 'clip-' + name });
  add(clip, 'rect', { x: vx, y: vy, width: right - vx, height: bottom - vy });
  const plot = add(svg, 'g', { 'clip-path': `url(#clip-${name})` });

  add(plot, 'text', { x: c.watermark[0], y: c.watermark[1], 'text-anchor': 'end', class: 'watermark' }, 'Allemagne 40 Cash (1€)');
  drawCandles(add(plot, 'g', { 'shape-rendering': 'crispEdges' }), c);
  c.lines.forEach(([x1, y1, x2, y2, stroke, width]) => {
    add(plot, 'line', { x1, y1, x2, y2, stroke, 'stroke-width': width });
  });
  c.dashes?.forEach(([y, stroke]) => {
    add(plot, 'path', { d: `M${vx} ${y + 0.5}H${right}`, stroke, 'stroke-dasharray': '4 4' });
  });
  c.signals?.forEach(([x, y]) => add(plot, 'use', { href: '#m-pair', x, y, width: 14, height: 12 }));
  c.texts?.forEach(([x, y, text, fill, anchor = 'start', cls = '']) => {
    add(plot, 'text', { x, y, fill, 'text-anchor': anchor, class: cls }, text);
  });
  if (c.info) {
    const [x, y, gap] = c.info;
    INFO.forEach((text, i) => label(plot, x, y + i * gap, text, 'middle'));
  }
  c.markers?.forEach(d => add(plot, 'path', { d, class: 'marker' }));
  label(plot, vx + 1, bottom - 3, 'IT-Finance.com - Temps Réel', 'start');
  if (name === 'daily') {
    // position marks around the last candles, and the data loading bar
    add(plot, 'path', { d: 'M419 171l3 4-1 3 2 4-1 4 1 4-4 7z', fill: '#3cc43c', stroke: '#108010' });
    add(plot, 'path', { d: 'M430 169l-4 4 2 4-3 4 3 4-3 5 5 7z', fill: '#e85858', stroke: '#b02020' });
    add(svg, 'rect', { x: 40, y: 492, width: 85, height: 2, fill: 'url(#feedFill)' });
  }

  // axes
  const grey = '#98a5ad';
  add(svg, 'path', { d: `M${right + 0.5} ${vy}V${bottom + 0.5}H${vx}`, fill: 'none', stroke: grey });
  c.yAxis.forEach(([text, y]) => {
    add(svg, 'path', { d: `M${right} ${y + 0.5}h5`, stroke: grey });
    label(svg, right + 7, y + 4, text, 'start');
  });
  c.tags.forEach(([y, text, gold]) => {
    add(svg, 'path', { d: `M${right} ${y + 8.5}h5`, stroke: '#000' });
    add(svg, 'rect', { x: right + 5.5, y: y + 0.5, width: 45, height: 16, fill: gold ? 'url(#goldFill)' : '#f4f4f4', stroke: grey });
    label(svg, right + 7, y + 13, text, 'start');
  });
  c.xAxis.forEach(([x, text]) => {
    add(svg, 'path', { d: `M${x + 0.5} ${bottom}v4`, stroke: grey });
    label(svg, x, bottom + 16, text, 'middle');
  });
  c.ticks?.forEach(x => add(svg, 'path', { d: `M${x + 0.5} ${bottom}v4`, stroke: grey }));
  c.days?.forEach(([x, text]) => label(svg, x, bottom + 28, text, 'middle'));
  c.splits?.forEach(x => add(svg, 'path', { d: `M${x + 0.5} ${bottom + 19}v13`, stroke: grey }));
}

function fill(target, id) {
  if (target) target.append(document.getElementById(id).content.cloneNode(true));
}

document.querySelectorAll('.window').forEach(win => {
  fill(win.querySelector('.win-buttons'), 'winTpl');
  fill(win.querySelector('.sidebar'), 'sidebarTpl');
  fill(win.querySelector('.toolbar'), 'toolbarTpl');
  if (win.dataset.chart) {
    win.querySelector('.thumb').style.width = win.dataset.thumb + 'px';
    drawChart(win.querySelector('.chart'), win.dataset.chart);
  }
});
```
